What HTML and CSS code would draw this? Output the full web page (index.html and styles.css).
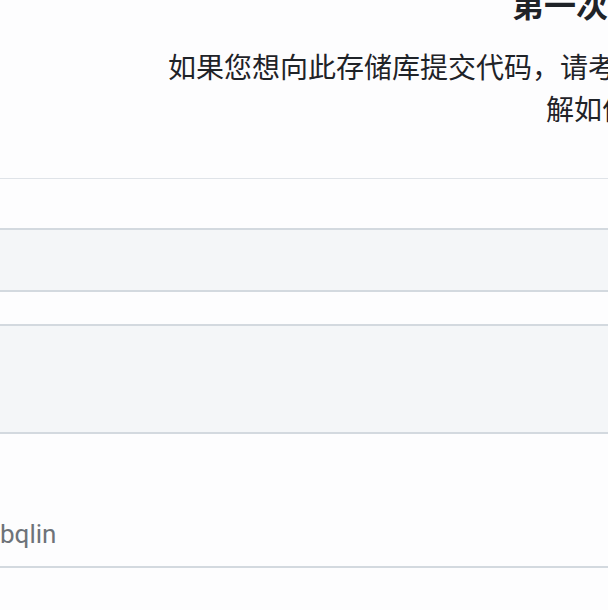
FILE: index.html
```html
<!DOCTYPE html>
<html lang="zh-CN">
<head>
<meta charset="utf-8">
<title>贡献</title>
<link rel="stylesheet" href="styles.css">
</head>
<body>
<section class="hero">
  <h1 class="hero-title">第一次参与此项目吗？</h1>
  <p class="hero-text">如果您想向此存储库提交代码，请考虑先阅读贡献指南和行为准则，以便更好地了<br>解如何参与本项目。</p>
</section>
<div class="list">
  <div class="row row-top"></div>
  <div class="row row-muted row-a"></div>
  <div class="row row-b"></div>
  <div class="row row-muted row-c"></div>
  <div class="row row-user"><span class="user-name">bqlin</span></div>
</div>
</body>
</html>
```
FILE: styles.css
```css
html, body {
  margin: 0;
  padding: 0;
  overflow: hidden;
  background: #fdfdfe;
}
body {
  width: 608px;
  height: 610px;
  font-family: "Noto Sans CJK SC", "Noto Sans", sans-serif;
  color: #1f2328;
}
.hero {
  width: 1344px;
  margin-top: -21px;
  text-align: center;
  white-space: nowrap;
}
.hero-title {
  margin: 0;
  font-size: 32px;
  line-height: 48px;
  font-weight: 700;
}
.hero-text {
  margin: 18px 0 0;
  font-size: 28px;
  line-height: 42px;
  font-weight: 400;
}
.list {
  margin-top: 49px;
  border-top: 1px solid #dfe3e8;
}
.row {
  border-bottom: 2px solid #d3d9df;
}
.row-top { height: 49px; }
.row-muted { background: #f4f6f8; }
.row-a { height: 60px; }
.row-b { height: 32px; }
.row-c { height: 106px; }
.row-user {
  height: 134px;
  box-sizing: border-box;
  padding-top: 85px;
}
.user-name {
  display: block;
  font-family: Roboto, "Liberation Sans", sans-serif;
  font-size: 26px;
  line-height: 30px;
  color: #6e7379;
}
```
